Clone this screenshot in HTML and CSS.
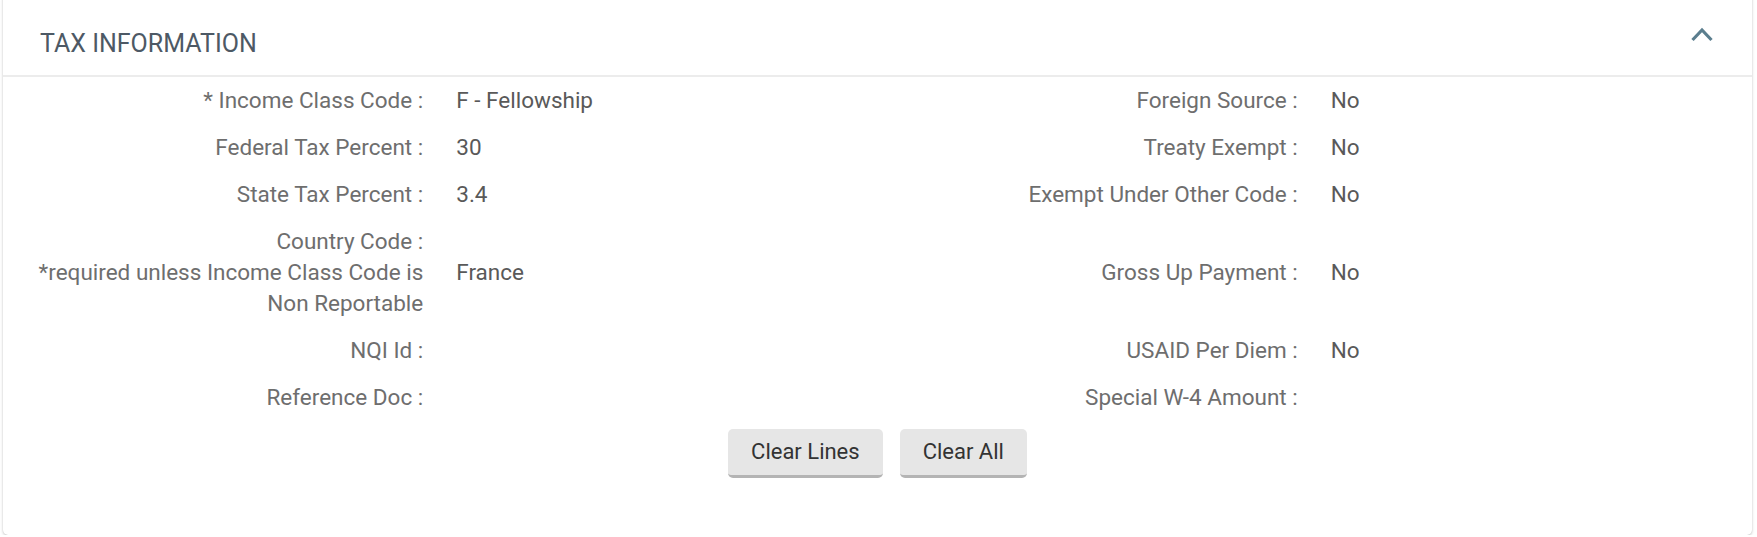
FILE: index.html
```html
<!DOCTYPE html>
<html lang="en">
<head>
<meta charset="utf-8">
<title>Tax Information</title>
<link rel="stylesheet" href="styles.css">
</head>
<body>
<section class="card">
  <header class="card-header">
    <h2 class="card-title">TAX INFORMATION</h2>
    <button class="collapse-btn" aria-label="Collapse">
      <svg width="24" height="16" viewBox="0 0 24 16"><polyline points="2.5,14 12,4 21.5,14" fill="none" stroke="#5b7e8e" stroke-width="3.2"/></svg>
    </button>
  </header>
  <div class="card-body">
    <div class="grid">
      <div class="label">* Income Class Code :</div>
      <div class="value">F - Fellowship</div>
      <div class="label">Foreign Source :</div>
      <div class="value">No</div>

      <div class="label">Federal Tax Percent :</div>
      <div class="value">30</div>
      <div class="label">Treaty Exempt :</div>
      <div class="value">No</div>

      <div class="label">State Tax Percent :</div>
      <div class="value">3.4</div>
      <div class="label">Exempt Under Other Code :</div>
      <div class="value">No</div>

      <div class="label">Country Code :<br>*required unless Income Class Code is Non Reportable</div>
      <div class="value">France</div>
      <div class="label">Gross Up Payment :</div>
      <div class="value">No</div>

      <div class="label">NQI Id :</div>
      <div class="value"></div>
      <div class="label">USAID Per Diem :</div>
      <div class="value">No</div>

      <div class="label">Reference Doc :</div>
      <div class="value"></div>
      <div class="label">Special W-4 Amount :</div>
      <div class="value"></div>
    </div>
    <div class="actions">
      <button class="btn">Clear Lines</button>
      <button class="btn">Clear All</button>
    </div>
  </div>
</section>
</body>
</html>
```
FILE: styles.css
```css
html, body {
  margin: 0;
  padding: 0;
  background: #ffffff;
}
body {
  font-family: Roboto, "Liberation Sans", Arial, sans-serif;
  font-size: 22.5px;
  line-height: 31px;
  color: #555;
  padding: 0 5px 0 3px;
}
.card {
  margin-top: -6px;
  padding-top: 6px;
  background: #fff;
  border-radius: 5px;
  box-shadow: 0 1px 3px rgba(0, 0, 0, 0.22), 0 0 1px rgba(0, 0, 0, 0.12);
}
.card-header {
  display: flex;
  justify-content: space-between;
  align-items: flex-start;
  padding: 0 38px 0 37px;
  box-sizing: border-box;
  border-bottom: 2px solid #ececec;
  height: 77px;
}
.card-title {
  margin: 27px 0 0 0;
  font-size: 25px;
  font-weight: 400;
  line-height: 34px;
  color: #4d5965;
}
.collapse-btn {
  margin-top: 26px;
  padding: 0;
  border: 0;
  background: transparent;
  line-height: 0;
}
.card-body {
  padding: 0 0 57px 0;
}
.grid {
  display: grid;
  grid-template-columns: 1fr 1fr 1fr 1fr;
  align-items: center;
}
.label {
  text-align: right;
  color: #6e6e6e;
  padding: 8px 17px 8px 16px;
  min-height: 31px;
}
.value {
  color: #595959;
  padding: 8px 16px;
  min-height: 31px;
}
.actions {
  display: flex;
  justify-content: center;
  gap: 17px;
  margin-top: 8px;
}
.btn {
  font-family: Roboto, "Liberation Sans", Arial, sans-serif;
  font-size: 22px;
  line-height: 31px;
  color: #333;
  background: #e6e6e6;
  border: 0;
  border-bottom: 3px solid #b4b4b4;
  border-radius: 5px;
  padding: 7px 23px 8px;
}
```
